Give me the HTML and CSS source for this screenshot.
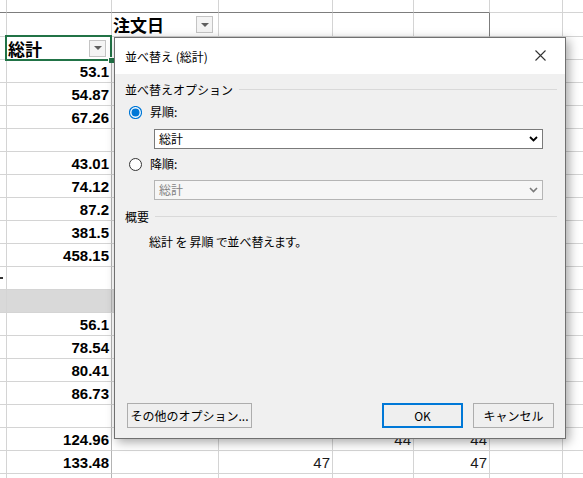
FILE: index.html
```html
<!DOCTYPE html>
<html lang="ja">
<head>
<meta charset="utf-8">
<title>並べ替え (総計)</title>
<link rel="stylesheet" href="styles.css">
</head>
<body>
<div class="sheet">
  <div class="c top"></div><div class="c top"></div><div class="c top"></div><div class="c top"></div><div class="c top"></div><div class="c top"></div><div class="c"></div><div class="c"></div>
  <div class="c"></div><div class="c"></div><div class="c hdr"><span>注文日</span><span class="fbtn"></span></div><div class="c"></div><div class="c"></div><div class="c pr"></div><div class="c"></div><div class="c"></div>
  <div class="c"></div><div class="c hdr"><span>総計</span><span class="fbtn"></span></div><div class="c"></div><div class="c"></div><div class="c"></div><div class="c"></div><div class="c"></div><div class="c"></div>
  <div class="c"></div><div class="c ca b">53.1</div><div class="c"></div><div class="c"></div><div class="c"></div><div class="c"></div><div class="c"></div><div class="c"></div>
  <div class="c"></div><div class="c ca b">54.87</div><div class="c"></div><div class="c"></div><div class="c"></div><div class="c"></div><div class="c"></div><div class="c"></div>
  <div class="c"></div><div class="c ca b">67.26</div><div class="c"></div><div class="c"></div><div class="c"></div><div class="c"></div><div class="c"></div><div class="c"></div>
  <div class="c"></div><div class="c ca b"></div><div class="c"></div><div class="c"></div><div class="c"></div><div class="c"></div><div class="c"></div><div class="c"></div>
  <div class="c"></div><div class="c ca b">43.01</div><div class="c"></div><div class="c"></div><div class="c"></div><div class="c"></div><div class="c"></div><div class="c"></div>
  <div class="c"></div><div class="c ca b">74.12</div><div class="c"></div><div class="c"></div><div class="c"></div><div class="c"></div><div class="c"></div><div class="c"></div>
  <div class="c"></div><div class="c ca b">87.2</div><div class="c"></div><div class="c"></div><div class="c"></div><div class="c"></div><div class="c"></div><div class="c"></div>
  <div class="c"></div><div class="c ca b">381.5</div><div class="c"></div><div class="c"></div><div class="c"></div><div class="c"></div><div class="c"></div><div class="c"></div>
  <div class="c"></div><div class="c ca b">458.15</div><div class="c"></div><div class="c"></div><div class="c"></div><div class="c"></div><div class="c"></div><div class="c"></div>
  <div class="c"><i class="tick"></i></div><div class="c ca b"></div><div class="c"></div><div class="c"></div><div class="c"></div><div class="c"></div><div class="c"></div><div class="c"></div>
  <div class="c gray"></div><div class="c ca gray"></div><div class="c gray"></div><div class="c gray"></div><div class="c gray"></div><div class="c gray"></div><div class="c"></div><div class="c"></div>
  <div class="c"></div><div class="c ca b">56.1</div><div class="c"></div><div class="c"></div><div class="c"></div><div class="c"></div><div class="c"></div><div class="c"></div>
  <div class="c"></div><div class="c ca b">78.54</div><div class="c"></div><div class="c"></div><div class="c"></div><div class="c"></div><div class="c"></div><div class="c"></div>
  <div class="c"></div><div class="c ca b">80.41</div><div class="c"></div><div class="c"></div><div class="c"></div><div class="c"></div><div class="c"></div><div class="c"></div>
  <div class="c"></div><div class="c ca b">86.73</div><div class="c"></div><div class="c"></div><div class="c"></div><div class="c"></div><div class="c"></div><div class="c"></div>
  <div class="c"></div><div class="c ca b"></div><div class="c"></div><div class="c"></div><div class="c"></div><div class="c"></div><div class="c"></div><div class="c"></div>
  <div class="c"></div><div class="c ca b">124.96</div><div class="c"></div><div class="c"></div><div class="c">44</div><div class="c">44</div><div class="c"></div><div class="c"></div>
  <div class="c"></div><div class="c ca b">133.48</div><div class="c"></div><div class="c">47</div><div class="c"></div><div class="c">47</div><div class="c"></div><div class="c"></div>
  <div class="c"></div><div class="c ca b"></div><div class="c"></div><div class="c"></div><div class="c"></div><div class="c"></div><div class="c"></div><div class="c"></div>
</div>

<div class="sel"><span class="handle"></span></div>

<div class="dialog">
  <div class="titlebar">
    <span class="title">並べ替え (総計)</span>
    <svg class="close" width="11" height="11" viewBox="0 0 11 11"><path d="M0.5 0.5 L10.5 10.5 M10.5 0.5 L0.5 10.5" stroke="#333" stroke-width="1.1" fill="none"/></svg>
  </div>
  <div class="body">
    <div class="group-head"><span>並べ替えオプション</span><i class="rule"></i></div>
    <div class="radio-row r1">
      <svg width="13" height="13" viewBox="0 0 13 13"><circle cx="6.5" cy="6.5" r="6" fill="#fff" stroke="#0078d7" stroke-width="1.2"/><circle cx="6.5" cy="6.5" r="4" fill="#0078d7"/></svg>
      <span>昇順:</span>
    </div>
    <div class="select s1"><span>総計</span><svg width="9" height="6" viewBox="0 0 9 6"><path d="M1 1 L4.5 4.5 L8 1" fill="none" stroke="#000" stroke-width="1.8"/></svg></div>
    <div class="radio-row r2">
      <svg width="13" height="13" viewBox="0 0 13 13"><circle cx="6.5" cy="6.5" r="6" fill="#fff" stroke="#333" stroke-width="1"/></svg>
      <span>降順:</span>
    </div>
    <div class="select s2 disabled"><span>総計</span><svg width="9" height="6" viewBox="0 0 9 6"><path d="M1 1 L4.5 4.5 L8 1" fill="none" stroke="#7a7a7a" stroke-width="1.6"/></svg></div>
    <div class="group-head g2"><span>概要</span><i class="rule"></i></div>
    <p class="summary">総計 を 昇順 で並べ替えます。</p>
    <div class="buttons">
      <div class="btn more">その他のオプション...</div>
      <div class="spacer"></div>
      <div class="btn ok">OK</div>
      <div class="btn cancel">キャンセル</div>
    </div>
  </div>
</div>
</body>
</html>
```
FILE: styles.css
```css
* { box-sizing: border-box; }
html, body { margin: 0; padding: 0; }
body {
  width: 583px;
  height: 478px;
  overflow: hidden;
  background: #fff;
  position: relative;
  font-family: "Liberation Sans", "Noto Sans CJK JP", sans-serif;
}

.sheet {
  display: grid;
  grid-template-columns: 7px 105px 107px 114px 81px 76px 73px 40px;
  grid-template-rows: 13px 24px;
  grid-auto-rows: 23px;
}
.c {
  border-right: 1px solid #d4d4d4;
  border-bottom: 1px solid #d4d4d4;
  font-size: 15px;
  line-height: 23px;
  padding-right: 2px;
  text-align: right;
  white-space: nowrap;
  overflow: hidden;
  color: #1a1a1a;
}
.b { font-weight: bold; color: #000; }
.top { border-bottom-color: #7d7d7d; }
.pr { border-right-color: #7d7d7d; }
.ca { border-right-color: #b4b4b4; }
.gray { background: #d9d9d9; }
.tick { display: block; width: 3px; height: 2px; background: #333; margin-top: 10px; }

.hdr {
  display: flex;
  align-items: center;
  justify-content: space-between;
  padding: 0 5px 0 1px;
  font-family: "Noto Sans CJK JP", sans-serif;
  font-weight: bold;
  font-size: 17px;
  color: #000;
}
.fbtn {
  width: 17px;
  height: 17px;
  border: 1px solid #c4c4c4;
  background: #f4f4f4;
  display: flex;
  align-items: center;
  justify-content: center;
}
.fbtn::after {
  content: "";
  border-left: 4px solid transparent;
  border-right: 4px solid transparent;
  border-top: 4px solid #5f5f5f;
}

.sel {
  position: absolute;
  left: 5px;
  top: 35px;
  width: 107px;
  height: 26px;
  border: 2px solid #217346;
}
.handle {
  position: absolute;
  right: -4px;
  bottom: -4px;
  width: 6px;
  height: 6px;
  background: #217346;
  border-left: 1px solid #fff;
  border-top: 1px solid #fff;
}

.dialog {
  position: absolute;
  left: 114px;
  top: 37px;
  width: 452px;
  height: 402px;
  border: 1px solid #707070;
  background: #f0f0f0;
  box-shadow: 3px 3px 10px rgba(0, 0, 0, 0.35);
  display: flex;
  flex-direction: column;
  font-family: "Noto Sans CJK JP", sans-serif;
  font-size: 12px;
  line-height: 16px;
  color: #000;
}
.titlebar {
  height: 36px;
  background: #fff;
  display: flex;
  align-items: center;
  justify-content: space-between;
  padding: 2px 19px 0 10px;
}
.close { margin-top: -4px; }

.body {
  flex: 1;
  display: flex;
  flex-direction: column;
  padding: 8px 8px 10px 10px;
}
.group-head {
  display: flex;
  align-items: center;
  gap: 6px;
  height: 16px;
}
.rule { flex: 1; height: 1px; background: #d9d9d9; margin-top: -1px; }
.g2 { margin-top: 9px; }

.radio-row {
  display: flex;
  align-items: center;
  gap: 8px;
  height: 16px;
  padding-left: 4px;
}
.r1 { margin-top: 6px; }
.r2 { margin-top: 7px; }

.select {
  margin-left: 29px;
  width: 389px;
  height: 20px;
  border: 1px solid #7a7a7a;
  background: #fff;
  display: flex;
  align-items: center;
  justify-content: space-between;
  padding: 0 4px 0 4px;
}
.s1 { margin-top: 9px; }
.s2 { margin-top: 8px; }
.disabled {
  border-color: #b5b5b5;
  background: #f6f6f6;
  color: #838383;
}

.summary {
  margin: 9px 0 0 24px;
  height: 16px;
  font-feature-settings: "palt";
}

.buttons {
  margin-top: auto;
  display: flex;
  align-items: center;
  padding-left: 2px;
  padding-right: 3px;
}
.spacer { flex: 1; }
.btn {
  height: 25px;
  border: 1px solid #adadad;
  background: #efefef;
  display: flex;
  align-items: center;
  justify-content: center;
}
.more { width: 125px; }
.ok { width: 81px; border: 2px solid #0078d7; }
.cancel { width: 81px; margin-left: 10px; }
```
